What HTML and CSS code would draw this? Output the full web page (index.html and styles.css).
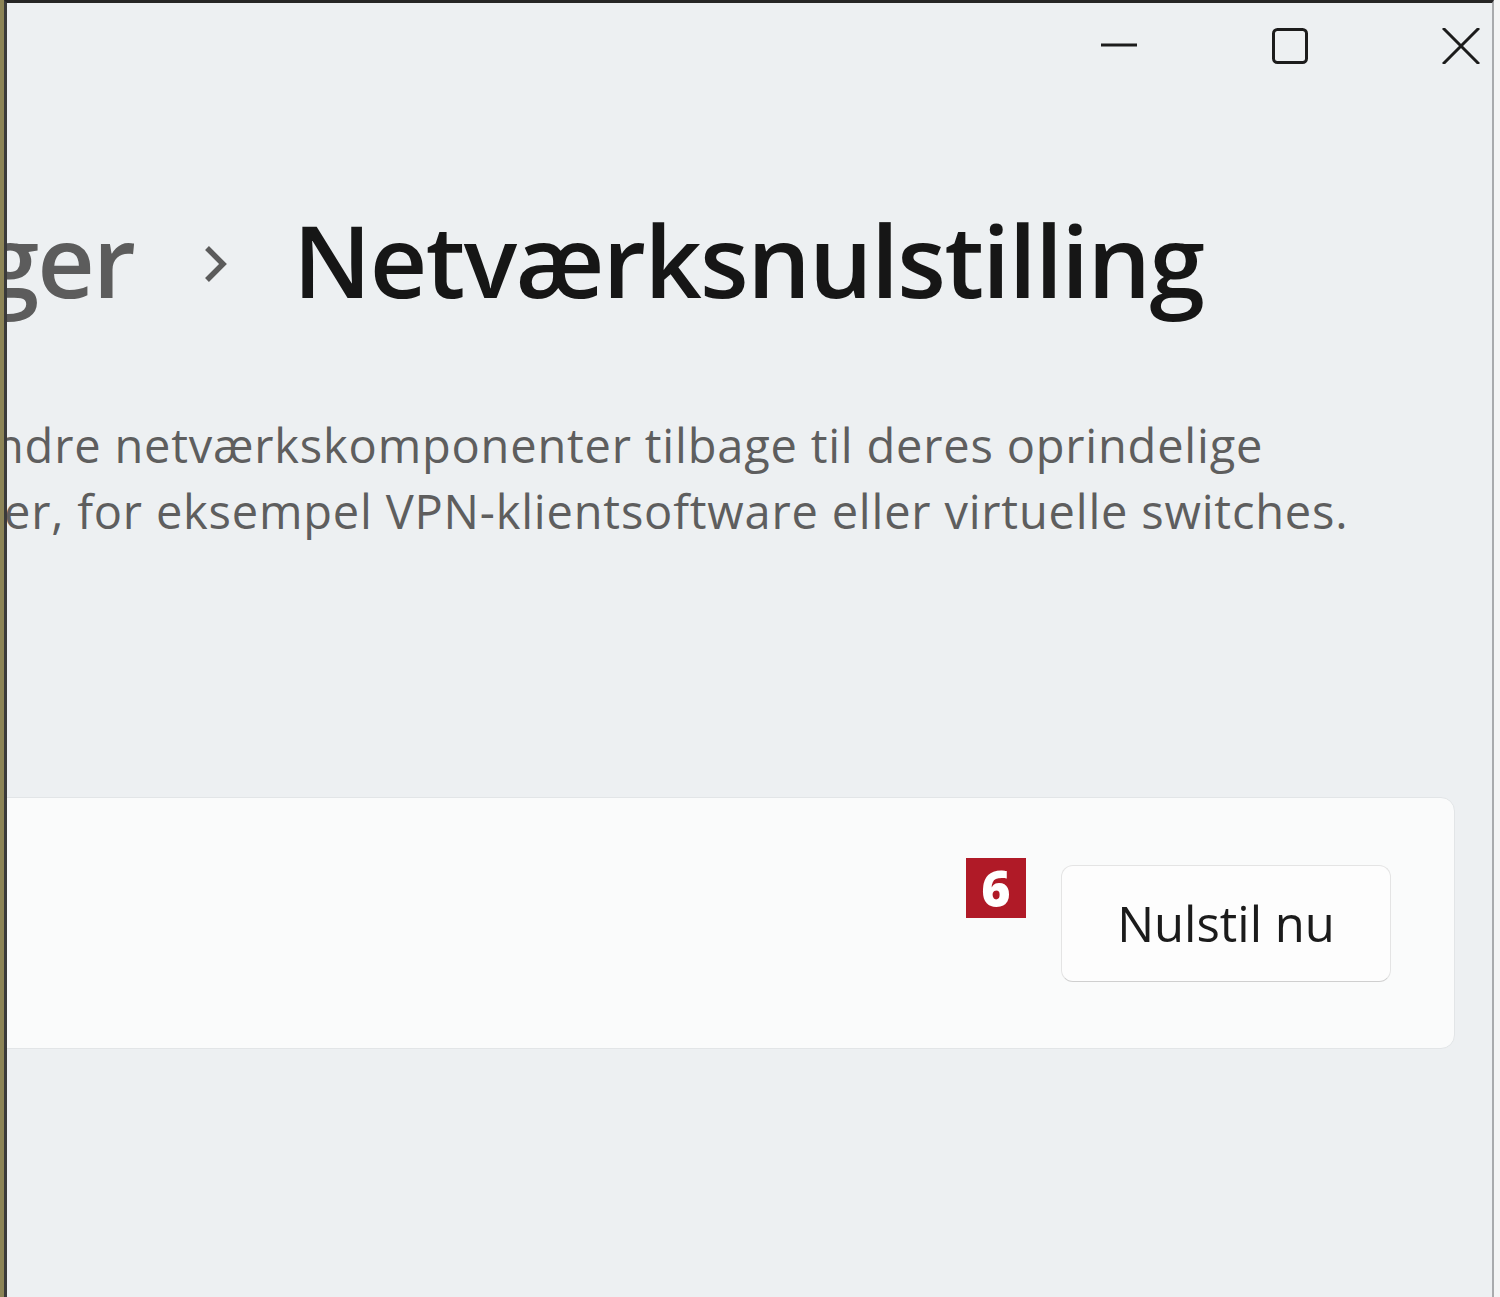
FILE: index.html
```html
<!DOCTYPE html>
<html lang="da">
<head>
  <meta charset="UTF-8" />
  <meta name="viewport" content="width=device-width, initial-scale=1.0" />
  <title>Netværksnulstilling</title>
  <link rel="stylesheet" href="styles.css">
</head>
<body>
  <div class="desktop-edge"></div>
  <div class="window">
    <div class="caption">
      <span class="cap-btn">
        <svg width="38" height="36" viewBox="0 0 38 36"><path d="M1 17h36" stroke="#1c1c1c" stroke-width="3"/></svg>
      </span>
      <span class="cap-btn">
        <svg width="38" height="36" viewBox="0 0 38 36"><rect x="2.5" y="1.5" width="33" height="33" rx="4" fill="none" stroke="#1c1c1c" stroke-width="3"/></svg>
      </span>
      <span class="cap-btn">
        <svg width="38" height="36" viewBox="0 0 38 36"><path d="M1 0L37 36M37 0L1 36" stroke="#1c1c1c" stroke-width="3"/></svg>
      </span>
    </div>

    <div class="heading">
      <div class="crumb"><span>Avancerede netværksindstillinger</span></div>
      <svg class="chevron" width="30" height="40" viewBox="0 0 30 40"><path d="M6 4l16 16L6 36" fill="none" stroke="#5b5b5b" stroke-width="5.5"/></svg>
      <h1>Netværksnulstilling</h1>
    </div>

    <div class="desc">
      <span class="line first">ndre netværkskomponenter tilbage til deres oprindelige</span>
      <span class="line second">er, for eksempel VPN-klientsoftware eller virtuelle switches.</span>
    </div>

    <div class="card">
      <span class="badge">6</span>
      <button class="reset">Nulstil nu</button>
    </div>
  </div>
</body>
</html>
```

FILE: styles.css
```css
body {
  margin: 0;
  height: 100vh;
  display: flex;
  background: #f4f5f5;
  font-family: 'Open Sans', 'Noto Sans', sans-serif;
  overflow: hidden;
}
.desktop-edge {
  width: 4px;
  background: #8c8456;
}
.window {
  flex: 1;
  margin-right: 6px;
  background: #edf0f2;
  border-top: 3px solid #262626;
  border-left: 3px solid #3a3a3a;
  border-right: 2px solid #a9abad;
  display: flex;
  flex-direction: column;
  overflow: hidden;
}
.caption {
  display: flex;
  justify-content: flex-end;
  gap: 133px;
  padding: 25px 12px 0 0;
}
.cap-btn {
  display: flex;
}
.heading {
  display: flex;
  align-items: center;
  margin-top: 135px;
  height: 120px;
}
.crumb {
  width: 127px;
  flex-shrink: 0;
  overflow: hidden;
  display: flex;
  justify-content: flex-end;
  white-space: nowrap;
  font-size: 100px;
  font-weight: 600;
  color: #5c5c5c;
  letter-spacing: -2px;
}
.chevron {
  margin-left: 67px;
  margin-top: 10px;
  flex-shrink: 0;
}
h1 {
  margin: 0 0 0 62px;
  font-size: 100px;
  font-weight: 600;
  color: #161616;
  letter-spacing: -1.6px;
  white-space: nowrap;
}
.desc {
  margin-top: 93px;
  font-size: 47px;
  line-height: 66px;
  letter-spacing: 0.8px;
  color: #5e5e5e;
  white-space: nowrap;
}
.line {
  display: block;
}
.line.first {
  margin-left: -12px;
}
.line.second {
  margin-left: -3px;
}
.card {
  margin: 253px 37px 0 -20px;
  height: 250px;
  background: #fafbfb;
  border: 1px solid #e2e5e7;
  border-radius: 14px;
  display: flex;
  justify-content: flex-end;
  align-items: center;
  padding-right: 63px;
}
.badge {
  align-self: flex-start;
  margin-top: 60px;
  width: 60px;
  height: 60px;
  background: #b01a27;
  color: #fff;
  font-weight: 800;
  font-size: 50px;
  line-height: 60px;
  text-align: center;
}
.reset {
  margin-left: 35px;
  width: 330px;
  height: 117px;
  background: #fdfdfd;
  border: 1px solid #e4e4e4;
  border-bottom-color: #cfcfcf;
  border-radius: 12px;
  font-family: 'Open Sans', 'Noto Sans', sans-serif;
  font-size: 49px;
  color: #1b1b1b;
}
```
